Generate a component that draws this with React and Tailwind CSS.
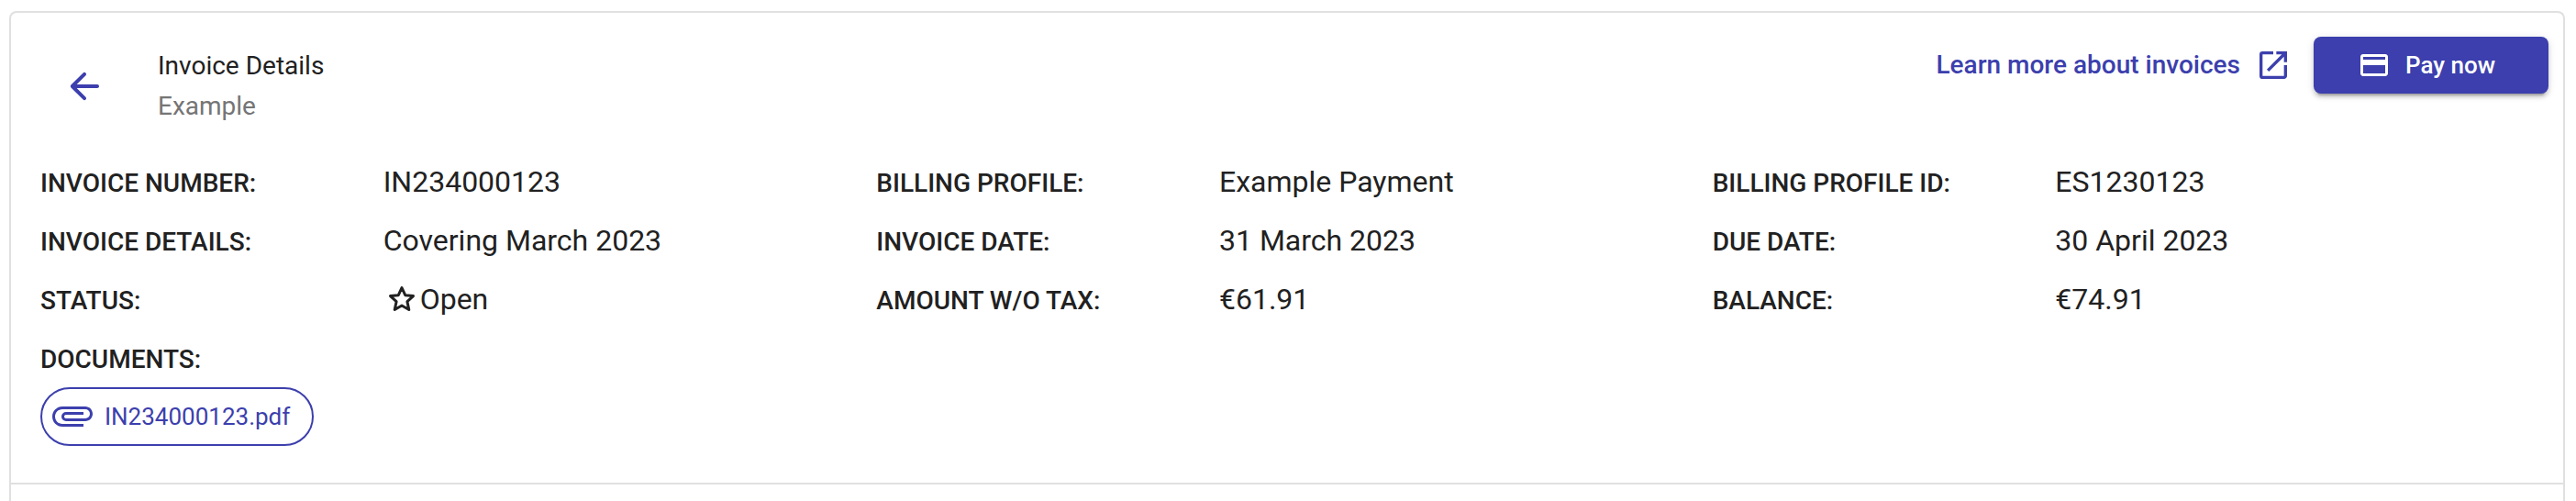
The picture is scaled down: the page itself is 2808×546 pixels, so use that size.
import React from 'react';
import { MdOutlineAttachment, MdOutlineCreditCard, MdOutlineOpenInNew } from 'react-icons/md';

const columns = [
  [
    { label: 'INVOICE NUMBER:', value: 'IN234000123' },
    { label: 'INVOICE DETAILS:', value: 'Covering March 2023' },
    { label: 'STATUS:', value: 'Open', star: true },
  ],
  [
    { label: 'BILLING PROFILE:', value: 'Example Payment' },
    { label: 'INVOICE DATE:', value: '31 March 2023' },
    { label: 'AMOUNT W/O TAX:', value: '€61.91' },
  ],
  [
    { label: 'BILLING PROFILE ID:', value: 'ES1230123' },
    { label: 'DUE DATE:', value: '30 April 2023' },
    { label: 'BALANCE:', value: '€74.91' },
  ],
];

const BackIcon = () => (
  <svg viewBox="0 0 24 24" className="size-12" fill="currentColor" aria-hidden="true">
    <path d="M19 11H7.83l4.88-4.88c.39-.39.39-1.03 0-1.42-.39-.39-1.02-.39-1.41 0l-6.59 6.59c-.39.39-.39 1.02 0 1.41l6.59 6.59c.39.39 1.02.39 1.41 0 .39-.39.39-1.02 0-1.41L7.83 13H19c.55 0 1-.45 1-1s-.45-1-1-1z" />
  </svg>
);

const StarIcon = () => (
  <svg viewBox="0 0 40 40" className="size-10 shrink-0 self-center" fill="none" stroke="currentColor" strokeWidth="3" strokeLinejoin="round" aria-hidden="true">
    <path d="M20 7.5l3.7 8.2 8.8.9-6.6 6 1.9 8.9-7.8-4.5-7.8 4.5 1.9-8.9-6.6-6 8.8-.9z" />
  </svg>
);

const DetailRow = ({ label, value, star }) => (
  <div className="flex h-16 items-baseline">
    <dt className="w-[41%] shrink-0 text-[28px] font-medium leading-[64px]">{label}</dt>
    <dd className="flex items-baseline text-[32px] leading-[64px]">
      {star && <StarIcon />}
      <span>{value}</span>
    </dd>
  </div>
);

const App = () => {
  return (
    <div className="px-2.5 pt-3 font-['Roboto',sans-serif] text-[#212121]">
      <div className="mr-0.5 rounded-t-lg border-2 border-b-0 border-[#e0e0e0] bg-white pb-[18px]">
        <section className="border-b-2 border-[#e0e0e0] pb-10 pl-8 pr-4">
          {/* Header */}
          <header className="flex items-start justify-between pt-6">
            <div className="flex items-start">
              <button type="button" aria-label="Back" className="p-6 pt-8 text-[#3c3fad]">
                <BackIcon />
              </button>
              <div className="pl-8 pt-3 text-[28px] leading-[44px]">
                <h1>Invoice Details</h1>
                <p className="text-[#757575]">Example</p>
              </div>
            </div>
            <div className="flex items-center gap-6 pt-0.5">
              <a href="#invoices" className="flex items-center gap-4 text-[28px] font-medium text-[#3c3fad]">
                Learn more about invoices
                <MdOutlineOpenInNew className="size-10" />
              </a>
              <button
                type="button"
                className="flex h-[62px] w-64 items-center gap-4 rounded-lg bg-[#3c3fad] pl-12 text-[26px] font-medium text-white shadow-[0_6px_2px_-4px_rgba(0,0,0,0.2),0_4px_4px_0_rgba(0,0,0,0.14),0_2px_10px_0_rgba(0,0,0,0.12)]"
              >
                <MdOutlineCreditCard className="size-9" />
                Pay now
              </button>
            </div>
          </header>

          {/* Details */}
          <div className="grid grid-cols-3 pt-6">
            {columns.map((rows, index) => (
              <dl key={index}>
                {rows.map((row) => (
                  <DetailRow key={row.label} {...row} />
                ))}
              </dl>
            ))}
          </div>

          {/* Documents */}
          <h2 className="h-16 pt-0.5 text-[28px] font-medium leading-[64px]">DOCUMENTS:</h2>
          <button
            type="button"
            className="flex h-16 items-center gap-3 rounded-full border-2 border-[#3c3fad] pl-2 pr-6 text-[26px] text-[#3c3fad]"
          >
            <MdOutlineAttachment className="size-12" />
            IN234000123.pdf
          </button>
        </section>
      </div>
    </div>
  );
};

export default App;
